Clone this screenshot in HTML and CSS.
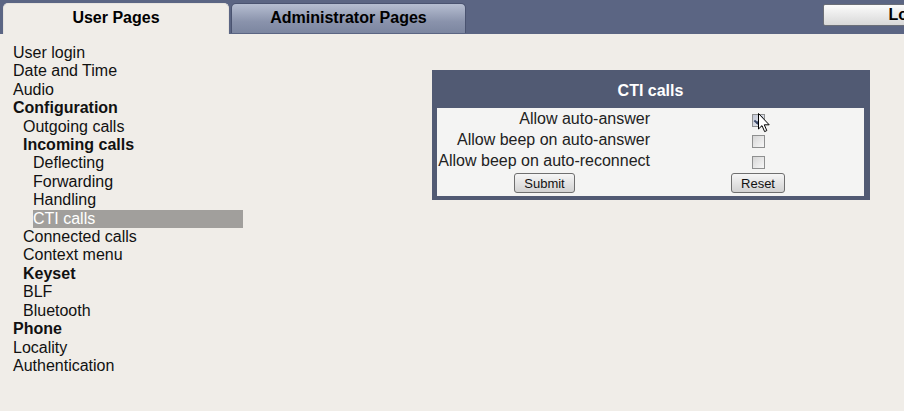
FILE: index.html
```
<!DOCTYPE html>
<html>
<head>
  <link rel="stylesheet" href="styles.css">
</head>
<body>

  <div class="topbar">
    <div class="tabs">
      <a class="tab tab-active" href="#">User Pages</a>
      <a class="tab" href="#">Administrator Pages</a>
    </div>
    <button type="button" class="logout">Logout</button>
  </div>

  <div class="page">
    <ul class="menu">
      <li><a href="#">User login</a></li>
      <li><a href="#">Date and Time</a></li>
      <li><a href="#">Audio</a></li>
      <li class="group">Configuration</li>
      <li class="lvl1"><a href="#">Outgoing calls</a></li>
      <li class="lvl1 group">Incoming calls</li>
      <li class="lvl2"><a href="#">Deflecting</a></li>
      <li class="lvl2"><a href="#">Forwarding</a></li>
      <li class="lvl2"><a href="#">Handling</a></li>
      <li class="lvl2 current"><a href="#">CTI calls</a></li>
      <li class="lvl1"><a href="#">Connected calls</a></li>
      <li class="lvl1"><a href="#">Context menu</a></li>
      <li class="lvl1 group">Keyset</li>
      <li class="lvl1"><a href="#">BLF</a></li>
      <li class="lvl1"><a href="#">Bluetooth</a></li>
      <li class="group">Phone</li>
      <li><a href="#">Locality</a></li>
      <li><a href="#">Authentication</a></li>
    </ul>

    <div class="content">
      <form class="panel" id="ctiForm">
        <h2 class="panel-title">CTI calls</h2>
        <table class="panel-body">
          <tr>
            <td class="label"><label for="autoAnswer">Allow auto-answer</label></td>
            <td class="field">
              <input type="checkbox" id="autoAnswer" checked>
              <svg class="cursor" width="13" height="20" viewBox="0 0 13 20">
                <path d="M0.5 0.5 L0.5 16 L4 12.6 L6.6 18.6 L8.8 17.6 L6.3 11.8 L11.2 11.8 Z" fill="#fff" stroke="#000" stroke-width="1" stroke-linejoin="round"/>
              </svg>
            </td>
          </tr>
          <tr>
            <td class="label"><label for="beepAnswer">Allow beep on auto-answer</label></td>
            <td class="field"><input type="checkbox" id="beepAnswer"></td>
          </tr>
          <tr>
            <td class="label"><label for="beepReconnect">Allow beep on auto-reconnect</label></td>
            <td class="field"><input type="checkbox" id="beepReconnect"></td>
          </tr>
          <tr class="actions">
            <td><button type="submit">Submit</button></td>
            <td><button type="reset">Reset</button></td>
          </tr>
        </table>
      </form>
    </div>
  </div>

</body>
</html>
```

FILE: styles.css
```
html, body {
  margin: 0;
  padding: 0;
  overflow: hidden;
}
body {
  background-color: #f0ede8;
  font-family: "Liberation Sans", Arial, sans-serif;
  font-size: 16px;
  color: #111;
}

/* top bar with the tabs */
.topbar {
  display: flex;
  align-items: flex-start;
  height: 34px;
  padding: 3px 0 0 3px;
  box-sizing: border-box;
  background-color: #5b6583;
  overflow: hidden;
}
.tabs {
  display: flex;
  gap: 2px;
  flex-shrink: 0;
}
.tab {
  display: block;
  width: 235px;
  height: 30px;
  line-height: 28px;
  text-align: center;
  font-weight: bold;
  color: #000;
  text-decoration: none;
  border: 1px solid #4a5370;
  border-bottom: 0;
  border-radius: 5px 5px 0 0;
  box-sizing: border-box;
  background: linear-gradient(#b6bed1, #8a93ac 60%, #7c86a0);
}
.tab-active {
  width: 226px;
  height: 31px;
  border-color: #e6e3de;
  background: #f0ede8;
}
.logout {
  flex-shrink: 0;
  margin: 1px 0 0 357px;
  width: 185px;
  height: 22px;
  padding: 0;
  font-family: inherit;
  font-size: 16px;
  font-weight: bold;
  color: #000;
  border: 1px solid #6b6f78;
  border-radius: 2px;
  background: linear-gradient(#fbfbfb, #e8e8e8 55%, #d8d8d8);
}

/* page body */
.page {
  display: flex;
  align-items: flex-start;
}
.menu {
  list-style: none;
  width: 230px;
  margin: 10px 0 0 13px;
  padding: 0;
  line-height: 18.4px;
}
.menu a {
  display: block;
  color: #111;
  text-decoration: none;
}
.group {
  font-weight: bold;
}
.lvl1 {
  padding-left: 10px;
}
.lvl2 {
  padding-left: 20px;
}
.current a {
  background-color: #a19f9c;
  color: #fff;
}

.content {
  margin: 36px 0 0 189px;
}
.panel {
  position: relative;
  width: 438px;
  margin: 0;
  padding: 0 6px 4px 5px;
  box-sizing: border-box;
  background-color: #515a73;
}
.panel-title {
  margin: 0;
  height: 38px;
  line-height: 42px;
  text-align: center;
  font-size: 16px;
  color: #fff;
}
.panel-body {
  width: 100%;
  table-layout: fixed;
  border-collapse: collapse;
  background-color: #f4f4f3;
}
.panel-body td {
  padding: 0;
  height: 21px;
}
.label {
  width: 213px;
  padding-right: 2px !important;
  text-align: right;
  white-space: nowrap;
  color: #222;
}
.field {
  position: relative;
  text-align: center;
}
.field input {
  appearance: none;
  position: relative;
  width: 13px;
  height: 13px;
  margin: 4px 0 0 0;
  vertical-align: top;
  border: 1px solid #8e8f8f;
  box-sizing: border-box;
  background: linear-gradient(135deg, #d6d6d6, #f7f7f7);
}
.field input:checked {
  background: linear-gradient(135deg, #c3c8d6, #eceef3);
}
.field input:checked::after {
  content: "";
  position: absolute;
  left: 3px;
  top: 0px;
  width: 3px;
  height: 7px;
  border: solid #3d4b6b;
  border-width: 0 2px 2px 0;
  transform: rotate(40deg);
}
.cursor {
  position: absolute;
  left: 106px;
  top: 5px;
}
.actions td {
  height: 25px;
  text-align: center;
  vertical-align: top;
}
.actions button {
  height: 20px;
  margin-top: 2px;
  padding: 0 9px;
  font-family: inherit;
  font-size: 13px;
  color: #111;
  border: 1px solid #6f6f6f;
  border-radius: 3px;
  background: linear-gradient(#f6f6f6, #e4e4e4 50%, #d2d2d2);
}
```
